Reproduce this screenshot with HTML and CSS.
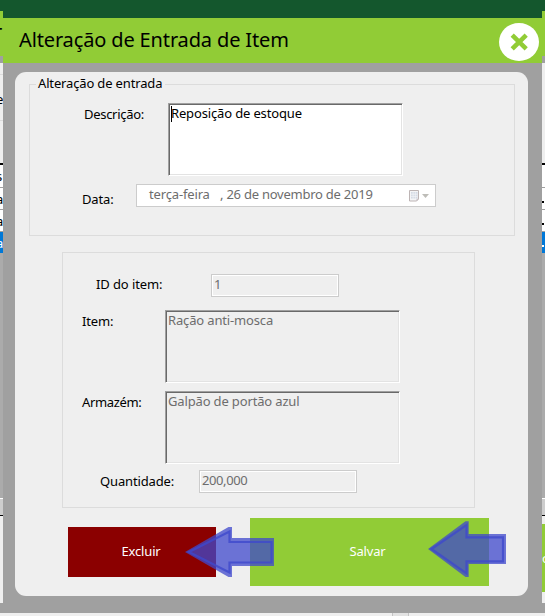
FILE: index.html
```html
<!DOCTYPE html>
<html lang="pt-BR">
<head>
<meta charset="utf-8">
<title>Alteração de Entrada de Item</title>
<link rel="stylesheet" href="styles.css">
</head>
<body>
<div class="desktop">
  <div class="strip left">
    <div class="s-dark"></div><div class="s-green"><span class="big">r</span></div><div class="s-gray"></div>
    <div class="s-a"></div><div class="s-b"><span>e</span></div><div class="s-c"></div>
    <div class="s-row first"><span>s</span></div><div class="s-row"><span>a</span></div><div class="s-row"><span>a</span></div>
    <div class="s-row sel"><span>a</span></div><div class="s-empty"></div><div class="s-scroll"></div><div class="s-end"></div>
  </div>
  <main class="dialog">
    <header class="titlebar">
      <h1>Alteração de Entrada de Item</h1>
      <svg class="close" width="40" height="38" viewBox="0 0 40 38"><ellipse cx="20" cy="19" rx="20" ry="19" fill="#fff"/><path d="M13.2 12.2 27.2 25.8M27.2 12.2 13.2 25.8" stroke="#91cc36" stroke-width="4.6"/></svg>
    </header>
    <section class="panel">
      <div class="group entry">
        <div class="legend"><span>Alteração de entrada</span></div>
        <div class="row desc"><label>Descrição:</label><div class="area white"><i class="caret"></i><span>Reposição de estoque</span></div></div>
        <div class="row date"><label>Data:</label>
          <div class="picker"><span class="weekday">terça-feira</span><span class="day">, 26 de novembro de 2019</span>
            <svg class="cal" width="22" height="14" viewBox="0 0 22 14"><path d="M1.500 1.500h9v8.500l-2 2h-7z" fill="#f4f4f6" stroke="#bdb4b4"/><path d="M3 3h6.500v6.500H3z" fill="#d4dae4"/><path d="M3 5.200h6.500M3 7.400h6.500M5.100 3v7M7.300 3v7" stroke="#f4f5f8" stroke-width=".7"/><path d="M8.500 12.500v-2.800H11z" fill="#c8bfc4"/><path d="M14 5h7l-3.500 4z" fill="#bebdb8"/></svg>
          </div></div>
      </div>
      <div class="group item">
        <div class="row id"><label>ID do item:</label><div class="input">1</div></div>
        <div class="row it"><label>Item:</label><div class="area"><span>Ração anti-mosca</span></div></div>
        <div class="row arm"><label>Armazém:</label><div class="area"><span>Galpão de portão azul</span></div></div>
        <div class="row qty"><label>Quantidade:</label><div class="input">200,000</div></div>
      </div>
      <div class="actions"><button class="delete">Excluir</button><button class="save">Salvar</button></div>
    </section>
  </main>
  <div class="strip right">
    <div class="s-dark"></div><div class="s-green"></div><div class="s-gray"></div>
    <div class="s-plain"></div>
    <div class="s-row first"></div><div class="s-row"><b></b></div><div class="s-row"><b></b></div>
    <div class="s-row sel"><b></b></div><div class="s-empty"></div><div class="s-scroll"></div><div class="s-end"><div class="s-button"><span>o</span></div></div>
  </div>
  <footer class="bottom"><div class="thumb"></div></footer>
  <svg class="arrow one" width="90" height="52" viewBox="0 0 90 52"><path d="M0 26 43.500 1H47V12H89V40H47V51H43.500Z" class="body"/><path d="M4 26 44.500 5.500V16H86.500V36.500H44.500V46.500Z" class="edge"/></svg>
  <svg class="arrow two" width="80" height="58" viewBox="0 0 80 58"><path d="M0 28 37.500 .3H40.700V13H78V43H40.700V56H37.500Z" class="body"/><path d="M3.500 28 38.500 4V16.300H75V40.300H38.500V52.300Z" class="edge"/></svg>
</div>
</body>
</html>
```
FILE: styles.css
```css
* { box-sizing: border-box; }
body { margin: 0; width: 545px; height: 616px; overflow: hidden; font: 13px/18px "Noto Sans", sans-serif; letter-spacing: -.15px; color: #000; background: #efefef; }
.desktop { position: relative; display: grid; grid-template-columns: 3px 539px 3px; grid-template-rows: 603px 13px; width: 545px; height: 616px; }

.strip { height: 603px; overflow: hidden; display: flex; flex-direction: column; background: #efefef; }
.strip > div { flex: none; overflow: hidden; width: 3px; }
.strip span { display: block; width: 10px; margin-left: -4px; }
.s-dark { height: 11px; background: #14572d; }
.s-green { height: 45px; background: #91cc36; }
.strip .big { font-size: 20px; margin: 12px 0 0 -6px; }
.s-gray { height: 7px; background: #a0a0a0; }
.s-a { height: 12px; border-bottom: 1px solid #dcdcdc; }
.s-b { height: 46px; border-bottom: 1px solid #dcdcdc; padding-top: 15px; }
.s-c { height: 42px; }
.s-plain { height: 100px; }
.s-row { height: 22px; background: #fff; border-bottom: 1px solid #a0a0a0; padding-top: 2px; }
.s-row.first { height: 25px; border-top: 2px solid #000; }
.s-row.sel { height: 21px; background: #0078d7; color: #fff; border: 0; }
.s-row b { display: block; width: 2px; height: 2px; background: #000; margin-top: 11px; }
.s-row.sel b { background: #fff; }
.s-empty { height: 246px; background: #ababab; border-bottom: 1px solid #fff; }
.s-scroll { height: 17px; background: #cdcdcd; border-bottom: 1px solid #000; }
.s-end { height: 86px; }
.s-button { height: 68px; margin-top: 8px; padding-top: 25px; background: #91cc36; color: #fff; }
.s-button span { margin-left: 0; }

.dialog { height: 603px; background: #a0a0a0; border-top: 18px solid #14572d; }
.titlebar { height: 45px; background: #91cc36; display: flex; justify-content: space-between; padding: 5px 3px 0 16px; }
h1 { margin: 3px 0 0; font-size: 20px; line-height: 28px; font-weight: 400; white-space: nowrap; letter-spacing: -.14px; }
.close { flex: none; }
.panel { width: 513px; height: 524px; margin: 9px 0 0 12px; padding: 12px 13px 0 14px; border-radius: 11px; background: #efefef; }
.group { border: 1px solid #dcdcdc; }
.row { display: flex; align-items: flex-start; white-space: nowrap; }
label { flex: none; display: block; }
.entry { width: 486px; height: 152px; }
.legend { height: 18px; margin: -11px 0 0 6px; }
.legend span { display: inline-block; padding: 0 3px 0 2px; background: #efefef; }
.desc { margin-top: 11px; padding-left: 54px; }
.desc label { width: 84px; padding-top: 2px; letter-spacing: -.3px; }
.area { position: relative; width: 235px; height: 73px; padding: 0 1px; border: 1px solid; border-color: #a0a0a0 #fff #fff #a0a0a0; box-shadow: inset 1px 1px #696969, inset -1px -1px #e3e3e3; color: #6d6d6d; }
.area span { display: block; margin-left: 1px; }
.white { background: #fff; color: #000; }
.caret { position: absolute; left: 2px; top: 2px; width: 1px; height: 16px; background: #000; }
.date { margin-top: 8px; padding-left: 52px; }
.date label { width: 54px; padding-top: 6px; }
.picker { width: 300px; height: 23px; border: 1px solid #cccccc; background: #fff; color: #6d6d6d; display: flex; padding: 0 5px 0 12px; }
.weekday { width: 71px; }
.day { letter-spacing: -.24px; }
.cal { margin: 4px 0 0 auto; }
.item { width: 413px; height: 256px; margin: 16px 0 0 33px; padding-top: 21px; }
.input { height: 23px; border: 1px solid #cccccc; box-shadow: inset 0 0 0 1px #fff; color: #6d6d6d; padding: 0 2px; }
.id { padding-left: 33px; }
.id label { width: 115px; padding-top: 1px; letter-spacing: 0; }
.id label { letter-spacing: -.1px; }
.id .input { width: 128px; }
.it { margin-top: 13px; padding-left: 19px; }
.it label, .arm label { width: 83px; padding-top: 2px; }
.arm label { letter-spacing: -.35px; }
.arm { margin-top: 8px; padding-left: 19px; }
.qty { margin-top: 6px; padding-left: 37px; }
.qty label { width: 99px; padding-top: 2px; }
.qty .input { width: 158px; letter-spacing: -.4px; }
.actions { display: flex; align-items: center; gap: 34px; margin: 10px 0 0 39px; height: 68px; }
button { border: 0; padding: 0; color: #fff; font: inherit; letter-spacing: -.15px; }
.delete { width: 148px; height: 50px; padding: 0 2px 2px 0; background: #8b0000; }
.save { width: 239px; height: 68px; padding: 0 4px 2px 0; background: #91cc36; }

.bottom { grid-column: 1 / 4; height: 13px; border-top: 10px solid #a0a0a0; background: #efefef; }
.thumb { width: 17px; height: 3px; margin-left: 392px; border: solid #c4c4c4; border-width: 0 1px; background: #e3e3e3; }
.arrow { position: absolute; }
.one { left: 185px; top: 526px; }
.two { left: 428px; top: 521px; }
.body { fill: #3f48cc; fill-opacity: .75; }
.edge { fill: none; stroke: #3f48cc; stroke-opacity: .8; stroke-width: 2.2; }
```
